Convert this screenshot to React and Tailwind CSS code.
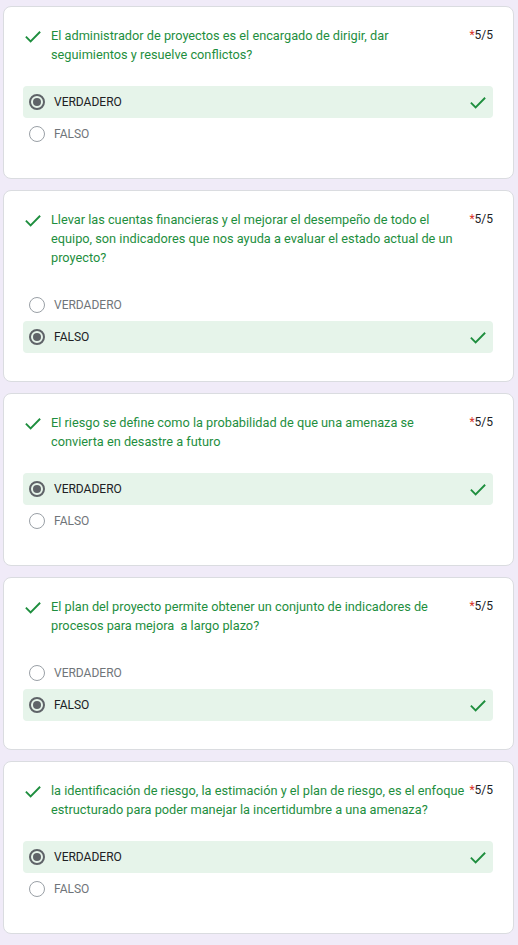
const questions = [
  {
    text: 'El administrador de proyectos es el encargado de dirigir, dar seguimientos y resuelve conflictos?',
    answer: 'VERDADERO',
  },
  {
    text: 'Llevar las cuentas financieras y el mejorar el desempeño de todo el equipo, son indicadores que nos ayuda a evaluar el estado actual de un proyecto?',
    answer: 'FALSO',
  },
  {
    text: 'El riesgo se define como la probabilidad de que una amenaza se convierta en desastre a futuro',
    answer: 'VERDADERO',
  },
  {
    text: 'El plan del proyecto permite obtener un conjunto de indicadores de procesos para mejora  a largo plazo?',
    answer: 'FALSO',
  },
  {
    text: 'la identificación de riesgo, la estimación y el plan de riesgo, es el enfoque estructurado para poder manejar la incertidumbre a una amenaza?',
    answer: 'VERDADERO',
  },
];

function Check({ className }) {
  return (
    <svg viewBox="0 0 24 24" className={className} fill="none" stroke="#1e8e3e" strokeWidth="2.5">
      <path d="M2.5 12.8l6.3 6.3L21.5 6.3" />
    </svg>
  );
}

function Radio({ on }) {
  if (on) {
    return (
      <span className="flex h-4 w-4 items-center justify-center rounded-full border-2 border-[#5f6368]">
        <span className="h-2 w-2 rounded-full bg-[#5f6368]" />
      </span>
    );
  }
  return <span className="h-4 w-4 rounded-full border-[1.5px] border-[#9aa0a6]" />;
}

function Option({ label, selected }) {
  return (
    <div className={`flex h-8 items-center gap-[9px] rounded pl-[6px] pr-[6px] ${selected ? 'bg-[#e6f4ea]' : ''}`}>
      <Radio on={selected} />
      <span className={`flex-1 text-[12px] ${selected ? 'text-[#202124]' : 'text-[#70757a]'}`}>{label}</span>
      {selected && <Check className="h-[18px] w-[18px]" />}
    </div>
  );
}

function QuestionCard({ q }) {
  return (
    <div className="rounded-lg border border-[#dadce0] bg-white pl-[19px] pr-[20px] pt-[19px] pb-[28px]">
      <div className="flex items-start">
        <div className="w-[28px] pl-[1px] pt-[1px]">
          <Check className="h-[18px] w-[18px]" />
        </div>
        <p className="flex-1 whitespace-pre-wrap text-[12.75px] leading-[19px] text-[#1e8e3e]">{q.text}</p>
        <span className="ml-[2px] text-[12px] leading-[19px] text-[#202124]">
          <span className="text-[#d93025]">*</span>5/5
        </span>
      </div>
      <div className="mt-[22px] flex flex-col">
        <Option label="VERDADERO" selected={q.answer === 'VERDADERO'} />
        <Option label="FALSO" selected={q.answer === 'FALSO'} />
      </div>
    </div>
  );
}

export default function App() {
  return (
    <div className="min-h-screen bg-[#f0ebf8] pl-[3px] pr-[4px] pt-[6px] pb-3 font-['Roboto',sans-serif]">
      <div className="flex flex-col gap-[11px]">
        {questions.map((q, i) => (
          <QuestionCard key={i} q={q} />
        ))}
      </div>
    </div>
  );
}
